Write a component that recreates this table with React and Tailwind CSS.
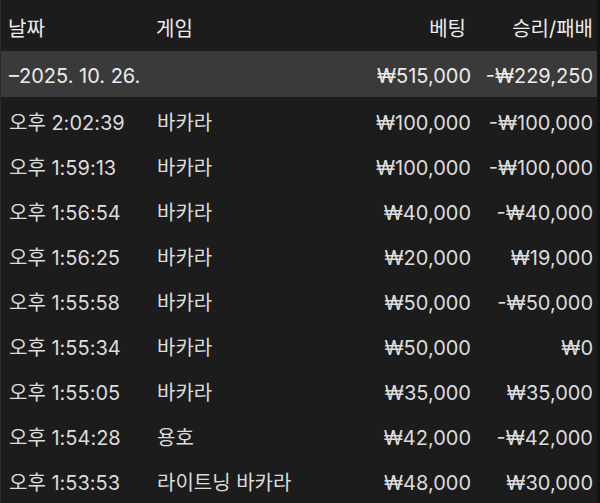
const rows = [
  ['오후 2:02:39', '바카라', '₩100,000', '-₩100,000'],
  ['오후 1:59:13', '바카라', '₩100,000', '-₩100,000'],
  ['오후 1:56:54', '바카라', '₩40,000', '-₩40,000'],
  ['오후 1:56:25', '바카라', '₩20,000', '₩19,000'],
  ['오후 1:55:58', '바카라', '₩50,000', '-₩50,000'],
  ['오후 1:55:34', '바카라', '₩50,000', '₩0'],
  ['오후 1:55:05', '바카라', '₩35,000', '₩35,000'],
  ['오후 1:54:28', '용호', '₩42,000', '-₩42,000'],
  ['오후 1:53:53', '라이트닝 바카라', '₩48,000', '₩30,000'],
]

function Row({ cells, className = '' }) {
  return (
    <div className={`grid grid-cols-[148px_1fr_130px_122px] items-center pl-[8px] pr-[4px] whitespace-nowrap ${className}`}>
      <div>{cells[0]}</div>
      <div>{cells[1]}</div>
      <div className="text-right">{cells[2]}</div>
      <div className="text-right">{cells[3]}</div>
    </div>
  )
}

export default function App() {
  return (
    <div
      className="w-[600px] h-[503px] overflow-hidden bg-[#1c1c1c] flex text-[20px] leading-none text-[#dcdcdc]"
      style={{ fontFamily: 'Inter, "Noto Sans CJK KR", sans-serif' }}
    >
      <div className="w-[597px] border-l border-[#2a2a2a]">
        <div className="grid grid-cols-[148px_1fr_130px_122px] items-center h-[51px] pt-[6px] pl-[7px] pr-[4px] text-[#ececec]">
          <div>날짜</div>
          <div>게임</div>
          <div className="text-right pr-[5px]">베팅</div>
          <div className="text-right">승리/패배</div>
        </div>
        <Row
          cells={['–2025. 10. 26.', '', '₩515,000', '-₩229,250']}
          className="h-[46px] pt-[4px] bg-[#3a3a3a] text-[#ececec]"
        />
        <div className="pt-[2px]">
          {rows.map((r, i) => (
            <Row key={i} cells={r} className="h-[45px] pt-[2px]" />
          ))}
        </div>
      </div>
      <div className="flex-1 bg-[#121212]" />
    </div>
  )
}
